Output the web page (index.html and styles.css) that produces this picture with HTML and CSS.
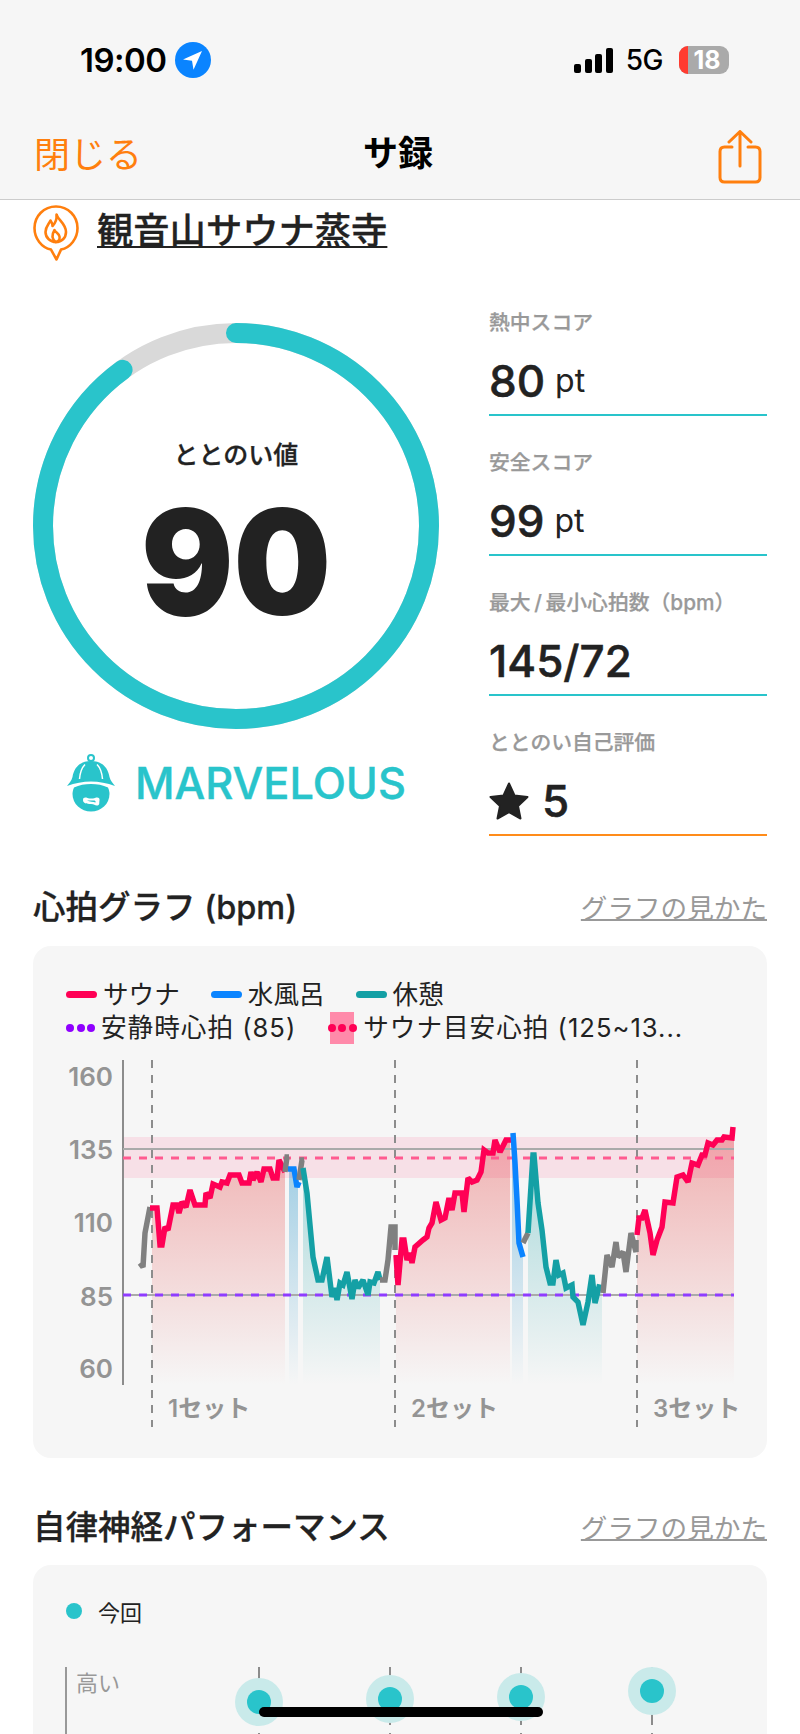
FILE: index.html
```html
<!DOCTYPE html>
<html lang="ja">
<head>
	<meta charset="UTF-8">
	<title>サ録</title>
	<link rel="stylesheet" href="styles.css">
</head>
<body>
	<!--ヘッダー-->
	<header class="top">
		<div class="status">
			<div class="status-left">
				<span class="clock">19:00</span>
				<svg class="loc" viewBox="0 0 36 36"><circle cx="18" cy="18" r="18" fill="#0a84ff"/><path d="M27 9 8 17.5l9 1.2 1.5 9z" fill="#fff"/></svg>
			</div>
			<div class="status-right">
				<svg class="signal" viewBox="0 0 39 25"><rect x="0" y="16" width="7" height="9" rx="2"/><rect x="11" y="11" width="7" height="14" rx="2"/><rect x="21" y="6" width="7" height="19" rx="2"/><rect x="32" y="0" width="7" height="25" rx="2"/></svg>
				<span class="net">5G</span>
				<div class="battery"><span class="battery-low"></span><span class="battery-num">18</span></div>
			</div>
		</div>
		<div class="nav">
			<a class="close">閉じる</a>
			<div class="nav-title">サ録</div>
			<svg class="share" viewBox="0 0 44 54" fill="none" stroke="#ff7f0e" stroke-width="3" stroke-linecap="round" stroke-linejoin="round"><path d="M22 36V2M11 12 22 1.500 33 12"/><path d="M14 17H6.500Q2 17 2 21.500V47.500Q2 52 6.500 52H37.500Q42 52 42 47.500V21.500Q42 17 37.500 17H30"/></svg>
		</div>
	</header>

	<main class="page">
		<div class="venue">
			<svg class="venue-icon" viewBox="0 0 46 56" fill="none" stroke="#ff7f0e" stroke-width="2.600" stroke-linejoin="round" stroke-linecap="round"><path d="M18 44.600C8.500 42.500 1.500 33.500 1.500 23 1.500 11 11 1.500 23 1.500S44.500 11 44.500 23C44.500 33.500 37.500 42.500 28 44.600L23.500 54.500Z" fill="#fff"/><path d="M23.500 9.500C25 15 33 18.500 33 27 33 33 28.500 37 23 37S12.500 33 12.500 27C12.500 21.500 16 19 17.500 15.500 19 17.500 19.500 19 19.500 21 22.500 18 24 14 23.500 9.500Z"/><path d="M22.500 37C19 34 18.500 30 21.500 25 23 28 25.500 28 26.500 31.500 27 33.500 26 36 23.500 37"/></svg>
			<a class="venue-name">観音山サウナ蒸寺</a>
		</div>

		<section class="score">
			<div class="score-left">
				<div class="ring">
					<svg class="ring-svg" viewBox="0 0 406 406">
						<circle cx="203" cy="203" r="193" fill="none" stroke="#d9d9d9" stroke-width="20"/>
						<!--90%の円弧-->
						<circle cx="203" cy="203" r="193" fill="none" stroke="#29c4cb" stroke-width="20" stroke-linecap="round" pathLength="100" stroke-dasharray="90 10" transform="rotate(-90 203 203)"/>
					</svg>
					<div class="ring-text">
						<div class="ring-label">ととのい値</div>
						<div class="ring-value">90</div>
					</div>
				</div>
				<div class="rank">
					<svg class="rank-icon" viewBox="0 0 50 58">
						<circle cx="25" cy="4" r="3" fill="none" stroke="#29c4cb" stroke-width="2"/>
						<path d="M25 7C12 7 7.500 16 6.500 23 5.500 27 3 29.500 1 32 9 29 17 27.500 25 27.500S41 29 49 32C47 29.500 44.500 27 43.500 23 42.500 16 38 7 25 7Z" fill="#29c4cb"/>
						<path d="M19 10.500C15.500 14 14 19 13.500 25M31 10.500C34.500 14 36 19 36.500 25" stroke="#fff" stroke-width="1.500" fill="none"/>
						<path d="M8 33.500C13 31 19 30 25 30S37 31 42 33.500C43 36 43.500 38 43.500 40 43.500 50 35 57.500 25 57.500S6.500 50 6.500 40C6.500 38 7 36 8 33.500Z" fill="#29c4cb"/>
						<path d="M17 46C17 43.500 19 43 21.500 44 24 45 27 44.500 29 44 32 43 34 44 33.500 46.500 33 49 34 51 31.500 51.500 29 52 28.500 50 25 50 20.500 50 17 49.500 17 46Z" fill="#fff"/>
						<path d="M21 46.500H27.500C29 46.500 30 47 29.500 48.500 27.500 47.800 23.500 48 21 46.500Z" fill="#29c4cb"/>
					</svg>
					<span class="rank-name">MARVELOUS</span>
				</div>
			</div>

			<div class="stats">
				<div class="stat">
					<div class="stat-label">熱中スコア</div>
					<div class="stat-value">80 <small>pt</small></div>
				</div>
				<div class="stat">
					<div class="stat-label">安全スコア</div>
					<div class="stat-value">99 <small>pt</small></div>
				</div>
				<div class="stat">
					<div class="stat-label">最大&#8201;/&#8201;最小心拍数（bpm）</div>
					<div class="stat-value">145/72</div>
				</div>
				<div class="stat stat-self">
					<div class="stat-label">ととのい自己評価</div>
					<div class="stat-value"><svg class="star" viewBox="0 0 40 38"><path d="M20 1.500 25.500 13.500 38.500 15 29 24 31.500 36.500 20 30.200 8.500 36.500 11 24 1.500 15 14.500 13.500Z" fill="#222" stroke="#222" stroke-width="2" stroke-linejoin="round"/></svg> 5</div>
				</div>
			</div>
		</section>

		<!--心拍グラフ-->
		<div class="sec-head">
			<h2 class="sec-title">心拍グラフ (bpm)</h2>
			<a class="sec-link">グラフの見かた</a>
		</div>
		<section class="card card-heart">
			<div class="legend">
				<div class="legend-row">
					<span class="swatch swatch-red"></span><span class="legend-text">サウナ</span>
					<span class="swatch swatch-blue"></span><span class="legend-text">水風呂</span>
					<span class="swatch swatch-teal"></span><span class="legend-text">休憩</span>
				</div>
				<div class="legend-row legend-row-wide">
					<span class="dots dots-purple"><i></i><i></i><i></i></span><span class="legend-text">安静時心拍 (85)</span>
					<span class="target"><span class="dots dots-red"><i></i><i></i><i></i></span></span><span class="legend-text">サウナ目安心拍 (125~13...</span>
				</div>
			</div>
			<svg class="heart" viewBox="33 1055 734 380">
				<defs>
					<linearGradient id="fr" gradientUnits="userSpaceOnUse" x1="0" y1="1130" x2="0" y2="1385"><stop offset="0" stop-color="#e65050" stop-opacity=".42"/><stop offset="1" stop-color="#e65050" stop-opacity="0"/></linearGradient>
					<linearGradient id="fb" gradientUnits="userSpaceOnUse" x1="0" y1="1130" x2="0" y2="1385"><stop offset="0" stop-color="#1e90c8" stop-opacity=".45"/><stop offset="1" stop-color="#1e90c8" stop-opacity="0"/></linearGradient>
					<linearGradient id="ft" gradientUnits="userSpaceOnUse" x1="0" y1="1130" x2="0" y2="1385"><stop offset="0" stop-color="#14a0a5" stop-opacity=".38"/><stop offset="1" stop-color="#14a0a5" stop-opacity="0"/></linearGradient>
				</defs>

				<!--塗り-->
				<polygon fill="url(#fr)" points="152,1208 157,1208 160,1245 162,1245 165,1227 168,1230 173,1205 177,1205 179,1213 182,1202 186,1207 190,1190 195,1205 205,1205 206,1193 210,1198 213,1184 220,1187 222,1182 227,1183 230,1175 239,1175 242,1183 249,1183 251,1172 253,1180 257,1172 261,1182 264,1169 270,1169 273,1178 277,1178 279,1160 285,1172 285,1385 152,1385"/>
				<polygon fill="url(#fb)" points="289,1169 294,1169 297,1187 298,1182 298,1385 289,1385"/>
				<polygon fill="url(#ft)" points="303,1168 307,1193 313,1257 318,1280 322,1280 327,1257 332,1297 335,1288 337,1300 340,1283 343,1285 347,1272 352,1299 355,1280 358,1288 363,1280 368,1295 370,1282 374,1283 378,1272 380,1280 380,1385 303,1385"/>
				<polygon fill="url(#fr)" points="396,1255 398,1285 402,1240 404,1240 407,1260 410,1253 412,1263 415,1247 423,1240 427,1237 429,1228 432,1223 436,1202 441,1220 445,1218 449,1198 452,1210 455,1193 462,1193 464,1212 468,1178 472,1182 477,1180 481,1172 484,1150 488,1153 493,1153 495,1140 500,1152 506,1140 510,1140 510,1385 396,1385"/>
				<polygon fill="url(#fb)" points="512,1133 515,1163 517,1200 519,1243 523,1257 523,1385 512,1385"/>
				<polygon fill="url(#ft)" points="528,1233 533,1155 534,1155 538,1203 542,1230 546,1267 550,1283 553,1283 556,1260 559,1275 563,1273 566,1288 572,1285 573,1297 578,1302 583,1325 588,1302 592,1275 595,1303 599,1287 602,1288 602,1385 528,1385"/>
				<polygon fill="url(#fr)" points="637,1235 639,1218 642,1218 645,1210 650,1233 653,1255 657,1240 662,1227 665,1202 673,1203 677,1177 683,1175 688,1182 692,1163 698,1165 702,1155 705,1155 708,1143 713,1145 717,1140 722,1140 724,1137 732,1138 734,1127 734,1385 637,1385"/>

				<!--目安帯-->
				<rect class="band" x="123" y="1137" width="611" height="41"/>

				<!--軸-->
				<line class="axis" x1="123" y1="1060" x2="123" y2="1385"/>
				<line class="vdash" x1="152" y1="1060" x2="152" y2="1427"/>
				<line class="vdash" x1="395" y1="1060" x2="395" y2="1427"/>
				<line class="vdash" x1="637" y1="1060" x2="637" y2="1427"/>
				<line class="hline" x1="123" y1="1149" x2="734" y2="1149"/>
				<line class="hline" x1="123" y1="1295" x2="734" y2="1295"/>
				<line class="target-line" x1="123" y1="1158" x2="734" y2="1158"/>
				<line class="rest-line" x1="123" y1="1295" x2="734" y2="1295"/>

				<text class="tick" x="113" y="1086">160</text>
				<text class="tick" x="113" y="1159">135</text>
				<text class="tick" x="113" y="1232">110</text>
				<text class="tick" x="113" y="1306">85</text>
				<text class="tick" x="113" y="1378">60</text>

				<text class="set" x="168" y="1417">1セット</text>
				<text class="set" x="411" y="1417">2セット</text>
				<text class="set" x="653" y="1417">3セット</text>

				<!--心拍ライン-->
				<polyline class="ln ln-gray" points="140,1263 143,1267 145,1233 150,1207"/>
				<polyline class="ln ln-red" points="150,1208 157,1208 160,1245 162,1245 165,1227 168,1230 173,1205 177,1205 179,1213 182,1202 186,1207 190,1190 195,1205 205,1205 206,1193 210,1198 213,1184 220,1187 222,1182 227,1183 230,1175 239,1175 242,1183 249,1183 251,1172 253,1180 257,1172 261,1182 264,1169 270,1169 273,1178 277,1178 279,1160 285,1172"/>
				<polyline class="ln ln-gray" points="285,1172 287,1157 289,1157"/>
				<polyline class="ln ln-blue" points="288,1169 294,1169 297,1187 299,1182"/>
				<polyline class="ln ln-gray" points="299,1180 302,1160 304,1160"/>
				<polyline class="ln ln-teal" points="303,1168 307,1193 313,1257 318,1280 322,1280 327,1257 332,1297 335,1288 337,1300 340,1283 343,1285 347,1272 352,1299 355,1280 358,1288 363,1280 368,1295 370,1282 374,1283 378,1272 380,1280"/>
				<polyline class="ln ln-gray" points="380,1280 385,1280 388,1260 391,1227 395,1227 395,1250"/>
				<polyline class="ln ln-red" points="396,1255 398,1285 402,1240 404,1240 407,1260 410,1253 412,1263 415,1247 423,1240 427,1237 429,1228 432,1223 436,1202 441,1220 445,1218 449,1198 452,1210 455,1193 462,1193 464,1212 468,1178 472,1182 477,1180 481,1172 484,1150 488,1153 493,1153 495,1140 500,1152 506,1140 511,1140"/>
				<polyline class="ln ln-blue" points="513,1133 515,1163 517,1200 519,1243 523,1257"/>
				<polyline class="ln ln-gray" points="523,1243 528,1233"/>
				<polyline class="ln ln-teal" points="528,1233 533,1155 534,1155 538,1203 542,1230 546,1267 550,1283 553,1283 556,1260 559,1275 563,1273 566,1288 572,1285 573,1297 578,1302 583,1325 588,1302 592,1275 595,1303 599,1287 603,1288"/>
				<polyline class="ln ln-gray" points="603,1293 607,1255 612,1267 616,1242 618,1257 623,1252 626,1272 631,1233 636,1252 636,1240"/>
				<polyline class="ln ln-red" points="637,1235 639,1218 642,1218 645,1210 650,1233 653,1255 657,1240 662,1227 665,1202 673,1203 677,1177 683,1175 688,1182 692,1163 698,1165 702,1155 705,1155 708,1143 713,1145 717,1140 722,1140 724,1137 732,1138 733,1127"/>
			</svg>
		</section>

		<!--自律神経パフォーマンス-->
		<div class="sec-head sec-head-second">
			<h2 class="sec-title">自律神経パフォーマンス</h2>
			<a class="sec-link">グラフの見かた</a>
		</div>
		<section class="card card-nerve">
			<div class="now"><span class="now-dot"></span><span class="now-text">今回</span></div>
			<svg class="nerve" viewBox="33 1660 734 74">
				<line class="nerve-axis" x1="66" y1="1667" x2="66" y2="1734"/>
				<text class="nerve-label" x="76" y="1691">高い</text>
				<line class="nerve-dash" x1="259" y1="1667" x2="259" y2="1734"/>
				<line class="nerve-dash" x1="390" y1="1667" x2="390" y2="1734"/>
				<line class="nerve-dash" x1="521" y1="1667" x2="521" y2="1734"/>
				<line class="nerve-dash" x1="652" y1="1667" x2="652" y2="1734"/>
				<circle class="halo" cx="259" cy="1702" r="24"/><circle class="pt" cx="259" cy="1702" r="12"/>
				<circle class="halo" cx="390" cy="1699" r="24"/><circle class="pt" cx="390" cy="1699" r="12"/>
				<circle class="halo" cx="521" cy="1697" r="24"/><circle class="pt" cx="521" cy="1697" r="12"/>
				<circle class="halo" cx="652" cy="1691" r="24"/><circle class="pt" cx="652" cy="1691" r="12"/>
			</svg>
		</section>
	</main>

	<div class="home-bar"></div>
</body>
</html>
```

FILE: styles.css
```css
*{
	padding: 0;
	margin: 0;
	box-sizing: border-box;
}
html,body{
	height: 1734px;
	overflow: hidden;
}
body{
	background-color: #fff;
	color: #222;
	font-family: Inter, "Noto Sans CJK JP", sans-serif;
	position: relative;
}

/* ヘッダー */
.top{
	height: 200px;
	background-color: #f6f6f6;
	border-bottom: 1px solid #ccc;
}
.status{
	height: 120px;
	padding: 42px 71px 0 80px;
	display: flex;
	justify-content: space-between;
	align-items: flex-start;
}
.status-left{
	display: flex;
	align-items: center;
	gap: 8px;
}
.clock{
	font-size: 33px;
	line-height: 35px;
	font-weight: 600;
	color: #000;
	letter-spacing: -0.5px;
}
.loc{
	width: 36px;
	height: 36px;
}
.status-right{
	display: flex;
	align-items: center;
	height: 36px;
}
.signal{
	width: 39px;
	height: 25px;
	margin-right: 13px;
}
.net{
	font-size: 28px;
	font-weight: 500;
	color: #000;
	letter-spacing: -0.5px;
	margin-right: 16px;
}
.battery{
	width: 50px;
	height: 28px;
	border-radius: 9px;
	background-color: #aaa;
	position: relative;
	overflow: hidden;
	text-align: center;
}
.battery-low{
	position: absolute;
	left: 0;
	top: 0;
	bottom: 0;
	width: 9px;
	background-color: #ff3b30;
}
.battery-num{
	position: relative;
	display: block;
	padding-left: 6px;
	font-size: 25px;
	line-height: 28px;
	font-weight: 700;
	color: #fff;
}
.nav{
	display: grid;
	grid-template-columns: 1fr auto 1fr;
	align-items: start;
	padding: 0 38px 0 34px;
}
.close{
	margin-top: 13px;
	font-size: 36px;
	line-height: 44px;
	color: #ff7f0e;
}
.nav-title{
	margin-top: 11px;
	font-size: 35px;
	line-height: 44px;
	font-weight: 700;
	color: #000;
}
.share{
	width: 44px;
	height: 54px;
	justify-self: end;
	margin-top: 10px;
}

.page{
	padding: 0 33px;
}
.venue{
	display: flex;
	align-items: flex-start;
	gap: 18px;
	margin-top: 5px;
}
.venue-icon{
	width: 46px;
	height: 56px;
}
.venue-name{
	margin-top: 2px;
	font-size: 36.300px;
	line-height: 48px;
	font-weight: 500;
	-webkit-text-stroke: .3px #222;
	text-decoration: underline;
	text-decoration-thickness: 2px;
	text-underline-offset: 2px;
}

/* スコア */
.score{
	display: flex;
	justify-content: space-between;
	margin-top: 62px;
}
.score-left{
	width: 406px;
}
.ring{
	width: 406px;
	height: 406px;
	position: relative;
}
.ring-svg{
	display: block;
	width: 406px;
	height: 406px;
}
.ring-text{
	position: absolute;
	inset: 0;
	text-align: center;
}
.ring-label{
	margin-top: 112px;
	font-size: 25px;
	line-height: 40px;
	font-weight: 500;
	-webkit-text-stroke: .3px #222;
}
.ring-value{
	margin-top: 12px;
	font-size: 146px;
	line-height: 150px;
	font-weight: 900;
	transform: scaleX(.94);
}
.rank{
	display: flex;
	align-items: center;
	justify-content: center;
	gap: 19px;
	margin-top: 25px;
}
.rank-icon{
	width: 50px;
	height: 58px;
}
.rank-name{
	font-size: 43.300px;
	line-height: 58px;
	font-weight: 500;
	-webkit-text-stroke: .4px #29c4cb;
	color: #29c4cb;
}
.stats{
	width: 278px;
	margin-top: -15px;
	display: flex;
	flex-direction: column;
	gap: 30px;
}
.stat{
	height: 108px;
	border-bottom: 2px solid #29c4cb;
}
.stat + .stat{
	margin-top: 2px;
}
.stat-self{
	border-bottom-color: #ff8c1a;
}
.stat-label{
	font-size: 20.800px;
	line-height: 30px;
	font-weight: 500;
	-webkit-text-stroke: .25px #999;
	color: #999;
	white-space: nowrap;
}
.stat-value{
	margin-top: 15px;
	font-size: 44px;
	line-height: 56px;
	font-weight: 500;
	-webkit-text-stroke: .5px #222;
	display: flex;
	align-items: center;
	gap: 10px;
}
.stat-value small{
	font-size: 32px;
	font-weight: 400;
	-webkit-text-stroke: 0;
}
.star{
	width: 40px;
	height: 38px;
	margin-right: 3px;
}

/* セクション */
.sec-head{
	display: flex;
	justify-content: space-between;
	align-items: center;
	margin-top: 52px;
}
.sec-title{
	font-size: 32.500px;
	line-height: 40px;
	font-weight: 500;
	-webkit-text-stroke: .3px #222;
}
.sec-link{
	font-size: 26.600px;
	line-height: 40px;
	color: #999;
	text-decoration: underline;
	text-decoration-thickness: 1.500px;
}
.card{
	margin-top: 18px;
	background-color: #f6f6f6;
	border-radius: 18px;
}
.card-heart{
	height: 512px;
	padding-top: 32px;
}
.legend{
	padding-left: 33px;
}
.legend-row{
	display: flex;
	align-items: center;
	height: 33px;
}
.legend-row-wide .legend-text{
	letter-spacing: 1px;
}
.legend-text{
	font-size: 25.600px;
	line-height: 33px;
	white-space: nowrap;
	margin-left: 6px;
	margin-right: 31px;
}
.swatch{
	width: 31px;
	height: 7px;
	border-radius: 4px;
}
.swatch-red{
	background-color: #ff0055;
}
.swatch-blue{
	background-color: #0a84ff;
}
.swatch-teal{
	background-color: #14a0a5;
}
.dots{
	width: 29px;
	display: flex;
	justify-content: space-between;
}
.dots i{
	width: 8px;
	height: 8px;
	border-radius: 50%;
}
.dots-purple i{
	background-color: #8f00ff;
}
.dots-red i{
	background-color: #ff0055;
}
.target{
	width: 24px;
	height: 32px;
	margin-left: 3px;
	margin-right: 3px;
	background-color: #ff8aaa;
	display: flex;
	align-items: center;
	justify-content: center;
}
.target .dots{
	flex: none;
}
.heart{
	display: block;
	width: 734px;
	height: 380px;
	margin-top: 11px;
}
.band{
	fill: #ff2060;
	fill-opacity: .1;
}
.axis{
	stroke: #8c8c8c;
	stroke-width: 2;
}
.vdash{
	stroke: #8c8c8c;
	stroke-width: 2;
	stroke-dasharray: 8 7;
}
.hline{
	stroke: #aaa;
	stroke-width: 2;
}
.target-line{
	stroke: #ff5a90;
	stroke-width: 3;
	stroke-dasharray: 8 8;
}
.rest-line{
	stroke: #8f3cff;
	stroke-width: 3;
	stroke-dasharray: 8 8;
}
.tick{
	font-size: 26px;
	font-weight: 600;
	fill: #949494;
	text-anchor: end;
}
.set{
	font-size: 24px;
	font-weight: 600;
	fill: #949494;
}
.ln{
	fill: none;
	stroke-width: 5.500;
	stroke-linejoin: miter;
	stroke-miterlimit: 2;
}
.ln-red{
	stroke: #ff0055;
}
.ln-blue{
	stroke: #0a84ff;
}
.ln-teal{
	stroke: #14a0a5;
}
.ln-gray{
	stroke: #808080;
}
.sec-head-second{
	margin-top: 50px;
}
.card-nerve{
	margin-top: 17px;
	height: 169px;
	border-radius: 18px 18px 0 0;
	background-color: #f6f6f6;
	padding-top: 33px;
}
.now{
	display: flex;
	align-items: center;
	padding-left: 33px;
	height: 26px;
}
.now-dot{
	width: 16px;
	height: 16px;
	border-radius: 50%;
	background-color: #29c4cb;
}
.now-text{
	font-size: 22px;
	margin-left: 16px;
}
.nerve{
	display: block;
	width: 734px;
	height: 74px;
	margin-top: 36px;
}
.nerve-axis{
	stroke: #999;
	stroke-width: 2;
}
.nerve-dash{
	stroke: #8c8c8c;
	stroke-width: 2;
	stroke-dasharray: 14 8;
}
.nerve-label{
	font-size: 22px;
	fill: #999;
}
.halo{
	fill: #c9eaea;
}
.pt{
	fill: #29c4cb;
}
.home-bar{
	position: absolute;
	left: 259px;
	top: 1707px;
	width: 284px;
	height: 10px;
	border-radius: 5px;
	background-color: #000;
}
```
